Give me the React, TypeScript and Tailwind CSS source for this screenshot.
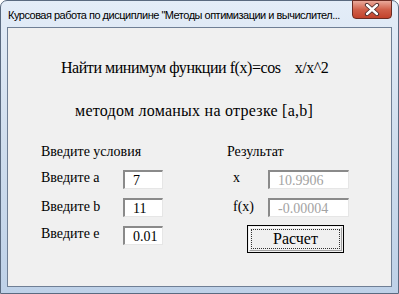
import React from "react";

const serif = { fontFamily: '"Liberation Serif", "Times New Roman", serif' };

function Field({ value, w, gray }: { value: string; w: string; gray?: boolean }) {
  return (
    <div
      className={`${w} h-[19px] border-t-2 border-l-2 border-r border-b border-t-[#8a8a8a] border-l-[#8a8a8a] border-r-[#e6e6e6] border-b-[#e6e6e6] bg-white pl-[8px] text-[14px] leading-[16px] pt-[1px] ${gray ? "text-[#a3a3a3]" : "text-black"}`}
    >
      {value}
    </div>
  );
}

export default function App() {
  return (
    <div className="w-[399px] h-[294px] bg-white">
      <div className="w-[399px] h-[294px] rounded-t-[7px] border border-[#5a6a80] bg-gradient-to-b from-[#e4edf8] via-[#cfdded] to-[#bed1e8] flex flex-col">
        {/* title bar */}
        <div className="h-[26px] flex items-start relative">
          <div
            className="pl-[7px] pt-[6px] w-[350px] overflow-hidden text-[11px] leading-[16px] tracking-[-0.5px] text-black whitespace-nowrap"
            style={{ fontFamily: '"Liberation Sans", Arial, sans-serif' }}
          >
            Курсовая работа по дисциплине "Методы оптимизации и вычислител...
          </div>
          <div className="absolute right-[6px] top-[-1px] w-[40px] h-[19px] rounded-b-[4px] border border-[#6b2b22] bg-gradient-to-b from-[#e9a99b] via-[#d0604a] to-[#c2422b] flex items-center justify-center">
            <svg width="16" height="13" viewBox="0 0 16 13">
              <path d="M3 2 L13 11 M13 2 L3 11" stroke="#4a2a2a" strokeWidth="4.2" strokeLinecap="round" />
              <path d="M3 2 L13 11 M13 2 L3 11" stroke="#ffffff" strokeWidth="2.4" strokeLinecap="round" />
            </svg>
          </div>
        </div>
        {/* client */}
        <div className="mx-[6px] h-[260px] border border-[#6f7f95] bg-[#f0f0f0] flex flex-col" style={serif}>
          <div className="mt-[31px] pl-[53px] text-[16px] leading-[18px] tracking-[-0.45px] text-black whitespace-nowrap">
            Найти минимум функции f(x)=cos&nbsp;&nbsp;&nbsp; x/x^2
          </div>
          <div className="mt-[25px] pl-[67px] text-[16px] leading-[18px] tracking-[0.25px] text-black whitespace-nowrap">
            методом ломаных на отрезке [a,b]
          </div>
          <div className="mt-[24px] pl-[33px] flex">
            <div className="w-[186px] flex flex-col">
              <div className="text-[14px] leading-[16px] text-black">Введите условия</div>
              <div className="mt-[10px] flex flex-col gap-[9px]">
                <div className="flex">
                  <div className="w-[82px] text-[14px] leading-[16px]">Введите a</div>
                  <Field value="7" w="w-[40px]" />
                </div>
                <div className="flex">
                  <div className="w-[82px] text-[14px] leading-[16px] pt-[1px]">Введите b</div>
                  <Field value="11" w="w-[40px]" />
                </div>
                <div className="flex">
                  <div className="w-[82px] text-[14px] leading-[16px] pt-[0px]">Введите e</div>
                  <Field value="0.01" w="w-[40px]" />
                </div>
              </div>
            </div>
            <div className="flex flex-col">
              <div className="text-[14px] leading-[16px] text-black">Результат</div>
              <div className="mt-[10px] flex flex-col gap-[9px]">
                <div className="flex">
                  <div className="w-[41px] pl-[6px] text-[14px] leading-[16px]">x</div>
                  <Field value="10.9906" w="w-[81px]" gray />
                </div>
                <div className="flex">
                  <div className="w-[41px] pl-[6px] text-[14px] leading-[16px] pt-[1px]">f(x)</div>
                  <Field value="-0.00004" w="w-[81px]" gray />
                </div>
              </div>
              <div className="mt-[8px] ml-[20px] w-[97px] h-[28px] border border-black bg-[#f0f0f0] p-[1px]">
                <div className="w-full h-full border border-t-white border-l-white border-r-[#a0a0a0] border-b-[#a0a0a0] p-[1px]">
                  <div className="w-full h-full border border-dotted border-[#333] flex items-center justify-center text-[16px] leading-[18px] text-black">
                    Расчет
                  </div>
                </div>
              </div>
            </div>
          </div>
        </div>
      </div>
    </div>
  );
}
